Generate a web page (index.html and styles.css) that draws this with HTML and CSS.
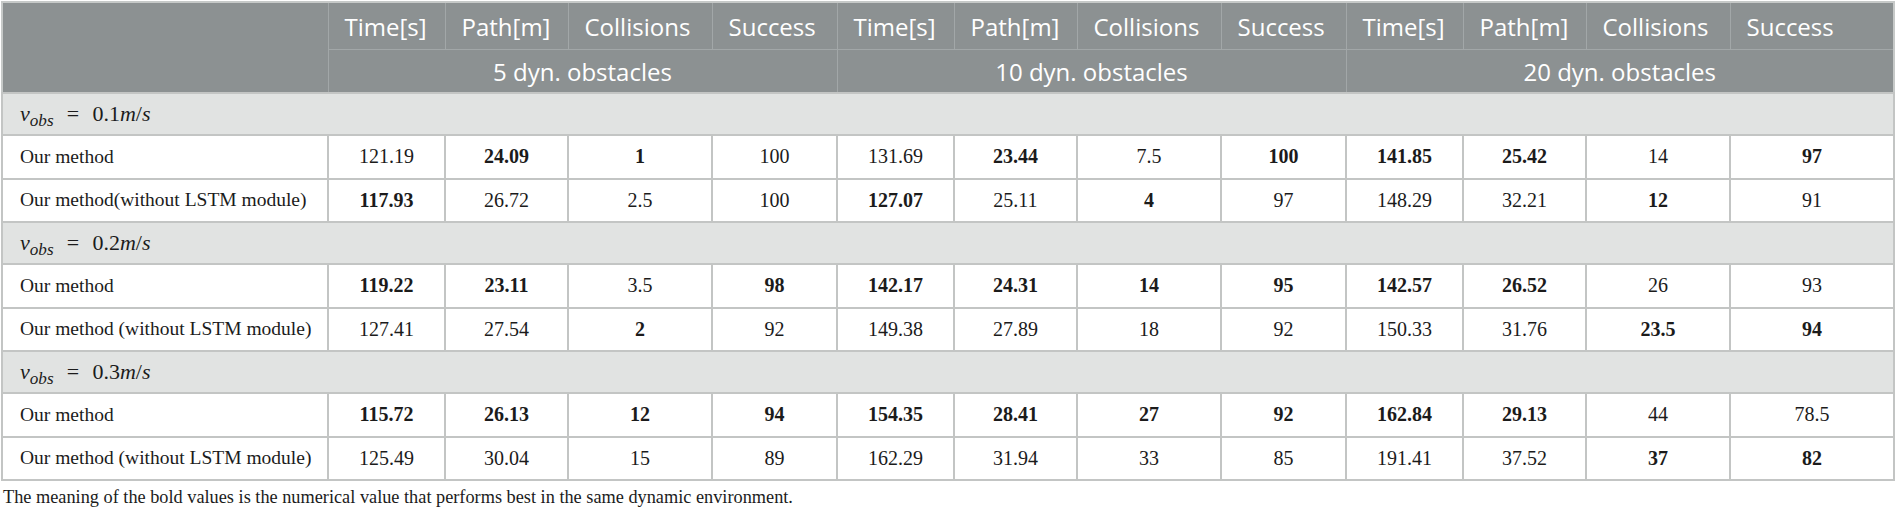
FILE: index.html
```html
<!DOCTYPE html>
<html lang="en">
<head>
    <meta charset="UTF-8">
    <meta name="viewport" content="width=device-width, initial-scale=1.0">
    <title>Dynamic obstacles results</title>
    <link rel="stylesheet" href="styles.css">
</head>
<body>
    <!-- Tabla de resultados por velocidad de obstáculos -->
    <table class="results">
        <colgroup>
            <col class="c-method">
            <col class="c-time"><col class="c-path"><col class="c-coll"><col class="c-succ">
            <col class="c-time"><col class="c-path"><col class="c-coll"><col class="c-succ">
            <col class="c-time"><col class="c-path"><col class="c-coll"><col class="c-succ-last">
        </colgroup>
        <thead>
            <tr class="top">
                <th rowspan="2"></th>
                <th>Time[s]</th><th>Path[m]</th><th>Collisions</th><th>Success</th>
                <th>Time[s]</th><th>Path[m]</th><th>Collisions</th><th>Success</th>
                <th>Time[s]</th><th>Path[m]</th><th>Collisions</th><th>Success</th>
            </tr>
            <tr class="groups">
                <th colspan="4">5 dyn. obstacles</th>
                <th colspan="4">10 dyn. obstacles</th>
                <th colspan="4">20 dyn. obstacles</th>
            </tr>
        </thead>
        <tbody>
            <tr class="speed">
                <td colspan="13"><span class="math"><i>v</i><sub><i>obs</i></sub><span class="eq">=</span>0.1<i>m</i>/<i>s</i></span></td>
            </tr>
            <tr>
                <td class="method">Our method</td>
                <td>121.19</td><td><b>24.09</b></td><td><b>1</b></td><td>100</td>
                <td>131.69</td><td><b>23.44</b></td><td>7.5</td><td><b>100</b></td>
                <td><b>141.85</b></td><td><b>25.42</b></td><td>14</td><td><b>97</b></td>
            </tr>
            <tr>
                <td class="method">Our method(without LSTM module)</td>
                <td><b>117.93</b></td><td>26.72</td><td>2.5</td><td>100</td>
                <td><b>127.07</b></td><td>25.11</td><td><b>4</b></td><td>97</td>
                <td>148.29</td><td>32.21</td><td><b>12</b></td><td>91</td>
            </tr>
            <tr class="speed">
                <td colspan="13"><span class="math"><i>v</i><sub><i>obs</i></sub><span class="eq">=</span>0.2<i>m</i>/<i>s</i></span></td>
            </tr>
            <tr>
                <td class="method">Our method</td>
                <td><b>119.22</b></td><td><b>23.11</b></td><td>3.5</td><td><b>98</b></td>
                <td><b>142.17</b></td><td><b>24.31</b></td><td><b>14</b></td><td><b>95</b></td>
                <td><b>142.57</b></td><td><b>26.52</b></td><td>26</td><td>93</td>
            </tr>
            <tr>
                <td class="method">Our method (without LSTM module)</td>
                <td>127.41</td><td>27.54</td><td><b>2</b></td><td>92</td>
                <td>149.38</td><td>27.89</td><td>18</td><td>92</td>
                <td>150.33</td><td>31.76</td><td><b>23.5</b></td><td><b>94</b></td>
            </tr>
            <tr class="speed">
                <td colspan="13"><span class="math"><i>v</i><sub><i>obs</i></sub><span class="eq">=</span>0.3<i>m</i>/<i>s</i></span></td>
            </tr>
            <tr>
                <td class="method">Our method</td>
                <td><b>115.72</b></td><td><b>26.13</b></td><td><b>12</b></td><td><b>94</b></td>
                <td><b>154.35</b></td><td><b>28.41</b></td><td><b>27</b></td><td><b>92</b></td>
                <td><b>162.84</b></td><td><b>29.13</b></td><td>44</td><td>78.5</td>
            </tr>
            <tr>
                <td class="method">Our method (without LSTM module)</td>
                <td>125.49</td><td>30.04</td><td>15</td><td>89</td>
                <td>162.29</td><td>31.94</td><td>33</td><td>85</td>
                <td>191.41</td><td>37.52</td><td><b>37</b></td><td><b>82</b></td>
            </tr>
        </tbody>
    </table>

    <!-- Nota al pie de la tabla -->
    <p class="caption">The meaning of the bold values is the numerical value that performs best in the same dynamic environment.</p>
</body>
</html>
```

FILE: styles.css
```css
body {
    margin: 0;
    padding: 1px 0 0 1px;
    background-color: #fff;
    color: #1b1b1b;
    font-family: "Liberation Serif", "Times New Roman", serif;
}
.results {
    border-collapse: collapse;
    table-layout: fixed;
    width: 1893px;
    border: 2px solid #c6c9c8;
}
.c-method { width: 326px; }
.c-time { width: 117px; }
.c-path { width: 123px; }
.c-coll { width: 144px; }
.c-succ { width: 125px; }
.c-succ-last { width: 164px; }
.results thead th {
    background-color: #8c9192;
    color: #fff;
    font-family: "Open Sans", sans-serif;
    font-weight: 400;
    font-size: 24px;
    text-align: left;
    padding: 0 16px;
    border: 1px solid #a2a7a8;
    white-space: nowrap;
}
.results thead tr.top th {
    height: 46px;
}
.results thead tr.groups th {
    height: 42px;
    text-align: center;
}
.results tbody td {
    height: 41.5px;
    padding: 0 8px;
    text-align: center;
    font-size: 20px;
    border: 2px solid #c3c5c4;
    background-color: #fff;
}
.results tbody td.method {
    text-align: left;
    padding-left: 17px;
    font-size: 19.5px;
}
.results tbody tr.speed td {
    height: 40px;
    background-color: #e1e3e2;
    text-align: left;
    padding: 0 17px;
    font-size: 22px;
}
.math sub {
    font-size: 0.78em;
    vertical-align: -0.3em;
    line-height: 0;
}
.math .eq {
    margin: 0 0.6em;
}
.caption {
    margin: 6px 0 0 2px;
    font-size: 18.3px;
}
```
